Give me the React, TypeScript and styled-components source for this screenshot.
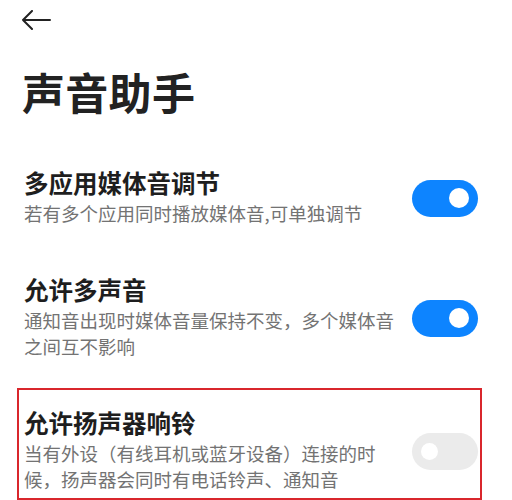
import React from "react";
import styled, { createGlobalStyle } from "styled-components";

const GlobalStyle = createGlobalStyle`
  html, body {
    margin: 0;
    padding: 0;
    background: #ffffff;
  }
  body {
    font-family: "Noto Sans CJK SC", "Noto Sans", sans-serif;
    -webkit-font-smoothing: antialiased;
  }
`;

const Page = styled.div`
  width: 512px;
  height: 500px;
  overflow: hidden;
  background: #ffffff;
  display: flex;
  flex-direction: column;
`;

const TopBar = styled.div`
  height: 40px;
  display: flex;
  align-items: center;
  padding-left: 21px;
`;

const BackButton = styled.button`
  border: none;
  background: none;
  padding: 0;
  width: 32px;
  height: 24px;
  display: flex;
  align-items: center;
  cursor: pointer;
`;

const Title = styled.h1`
  margin: 22px 0 27px 22px;
  font-size: 43px;
  line-height: 60px;
  font-weight: 700;
  color: #222222;
  letter-spacing: 0.3px;
`;

const List = styled.div`
  display: flex;
  flex-direction: column;
  gap: 21px;
`;

// the red frame on the last row is an annotation; the other rows keep a
// transparent one so every row lines up the same way
const Row = styled.div<{ $highlight?: boolean }>`
  margin: 0 30px 0 17px;
  padding: 16px 2px 2px 5px;
  border: 2px solid ${(p) => (p.$highlight ? "#d9262c" : "transparent")};
  display: flex;
  align-items: center;
  gap: 16px;
`;

const Texts = styled.div`
  flex: 1;
  min-width: 0;
  display: flex;
  flex-direction: column;
  padding-bottom: 4px;
`;

const RowTitle = styled.div`
  font-size: 24.5px;
  line-height: 34px;
  font-weight: 700;
  color: #1e1e1e;
`;

const RowDesc = styled.div`
  font-size: 18.5px;
  line-height: 26px;
  color: #737373;
  max-width: 374px;
`;

const Track = styled.div<{ $on: boolean }>`
  flex: none;
  width: 66px;
  height: 37px;
  border-radius: 19px;
  background: ${(p) => (p.$on ? "#0d84ff" : "#ebebeb")};
  display: flex;
  align-items: center;
  justify-content: ${(p) => (p.$on ? "flex-end" : "flex-start")};
  padding: 0 9px;
  box-sizing: border-box;
`;

const Knob = styled.div<{ $on: boolean }>`
  width: ${(p) => (p.$on ? "20px" : "17px")};
  height: ${(p) => (p.$on ? "20px" : "17px")};
  border-radius: 50%;
  background: #ffffff;
`;

const ArrowIcon = () => (
  <svg width="30" height="20" viewBox="0 0 30 20" fill="none">
    <path
      d="M29 10H2M11 1L2 10L11 19"
      stroke="#222222"
      strokeWidth="2"
      strokeLinecap="round"
      strokeLinejoin="round"
    />
  </svg>
);

type Setting = {
  title: string;
  desc: string;
  on: boolean;
  highlight?: boolean;
};

const settings: Setting[] = [
  {
    title: "多应用媒体音调节",
    desc: "若有多个应用同时播放媒体音,可单独调节",
    on: true,
  },
  {
    title: "允许多声音",
    desc: "通知音出现时媒体音量保持不变，多个媒体音之间互不影响",
    on: true,
  },
  {
    title: "允许扬声器响铃",
    desc: "当有外设（有线耳机或蓝牙设备）连接的时候，扬声器会同时有电话铃声、通知音",
    on: false,
    highlight: true,
  },
];

export default function App() {
  return (
    <>
      <GlobalStyle />
      <Page>
        <TopBar>
          <BackButton aria-label="返回">
            <ArrowIcon />
          </BackButton>
        </TopBar>
        <Title>声音助手</Title>
        <List>
          {settings.map((s) => (
            <Row key={s.title} $highlight={s.highlight}>
              <Texts>
                <RowTitle>{s.title}</RowTitle>
                <RowDesc>{s.desc}</RowDesc>
              </Texts>
              <Track $on={s.on}>
                <Knob $on={s.on} />
              </Track>
            </Row>
          ))}
        </List>
      </Page>
    </>
  );
}
